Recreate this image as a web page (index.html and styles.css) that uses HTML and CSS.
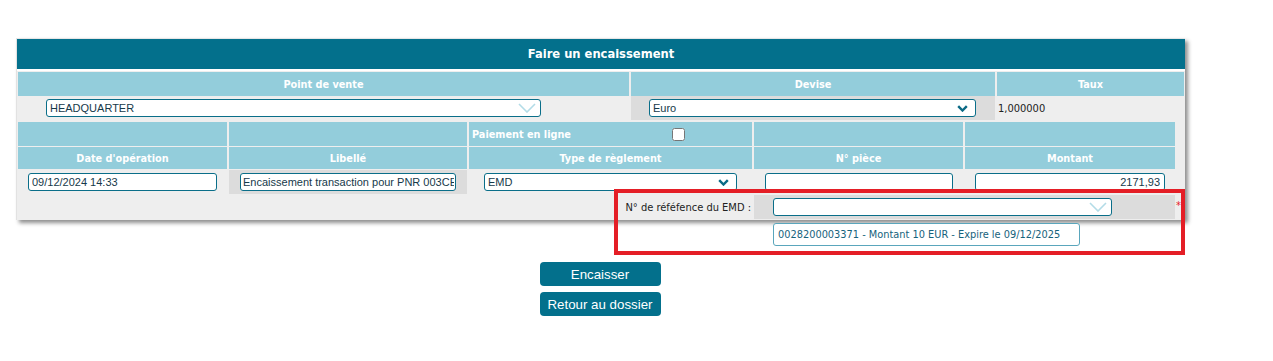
FILE: index.html
```html
<!DOCTYPE html>
<html>
<head>
  <meta charset="UTF-8">
  <title>Faire un encaissement</title>
  <link rel="stylesheet" href="styles.css">
</head>
<body>
  <div class="panel">
    <div class="title">Faire un encaissement</div>

    <div class="grid top">
      <div class="th">Point de vente</div>
      <div class="th">Devise</div>
      <div class="th">Taux</div>

      <div class="td pdv">
        <div class="sel wide">
          <span>HEADQUARTER</span>
          <svg class="chev light" width="18" height="10" viewBox="0 0 18 10"><path d="M1 1 L9 9 L17 1" fill="none" stroke="#b3dce7" stroke-width="1.6"/></svg>
        </div>
      </div>
      <div class="td dark devise">
        <div class="sel">
          <span>Euro</span>
          <svg class="chev" width="11" height="7" viewBox="0 0 11 7"><path d="M1.2 1.2 L5.5 5.5 L9.8 1.2" fill="none" stroke="#0b6a85" stroke-width="2.4"/></svg>
        </div>
      </div>
      <div class="td taux">1,000000</div>
    </div>

    <div class="grid ops">
      <div class="th"></div>
      <div class="th"></div>
      <div class="th online"><span>Paiement en ligne</span><input type="checkbox"></div>
      <div class="th"></div>
      <div class="th"></div>

      <div class="th">Date d'opération</div>
      <div class="th">Libellé</div>
      <div class="th">Type de règlement</div>
      <div class="th">N° pièce</div>
      <div class="th">Montant</div>

      <div class="td c1"><input class="txt date" value="09/12/2024 14:33"></div>
      <div class="td dark c2"><input class="txt libelle" value="Encaissement transaction pour PNR 003CE"></div>
      <div class="td c3">
        <div class="sel type">
          <span>EMD</span>
          <svg class="chev" width="11" height="7" viewBox="0 0 11 7"><path d="M1.2 1.2 L5.5 5.5 L9.8 1.2" fill="none" stroke="#0b6a85" stroke-width="2.4"/></svg>
        </div>
      </div>
      <div class="td c4"><input class="txt piece" value=""></div>
      <div class="td c5"><input class="txt montant" value="2171,93"></div>

      <div class="td emd-label">N° de réféfence du EMD :</div>
      <div class="td dark emd">
        <div class="sel emd-sel">
          <span></span>
          <svg class="chev light" width="18" height="10" viewBox="0 0 18 10"><path d="M1 1 L9 9 L17 1" fill="none" stroke="#b3dce7" stroke-width="1.6"/></svg>
        </div>
        <span class="req">*</span>
        <div class="options">0028200003371 - Montant 10 EUR - Expire le 09/12/2025</div>
      </div>
    </div>
  </div>

  <div class="actions">
    <button class="btn">Encaisser</button>
    <button class="btn">Retour au dossier</button>
  </div>

  <div class="highlight"></div>
</body>
</html>
```

FILE: styles.css
```css
body {
  margin: 0;
  background: #fff;
  font-family: "DejaVu Sans Condensed", "DejaVu Sans", sans-serif;
  font-stretch: condensed;
  font-size: 11px;
  color: #222;
}

.panel {
  margin: 38px 0 0 16px;
  width: 1168px;
  height: 181px;
  background: #eee;
  border-left: 1px solid #e2e2e2;
  border-top: 1px solid #e6e6e6;
  box-shadow: 3px 3px 4px #8f8f8f;
}

.title {
  height: 30px;
  line-height: 30px;
  background: #03708c;
  color: #fff;
  text-align: center;
  font-weight: bold;
  font-size: 12.8px;
  border-bottom: 2px solid #fff;
}

.grid {
  display: grid;
  column-gap: 2px;
  padding: 0 1px;
}

.top {
  grid-template-columns: 611px 364px 187px;
  grid-template-rows: 24px 24px;
  padding-top: 1px;
}

.ops {
  grid-template-columns: 209px 238px 283px 209px 210px;
  grid-template-rows: 24px 22px 24px 24px;
  row-gap: 1px;
  margin-top: 2px;
}

.th {
  background: #93cddb;
  color: #fff;
  font-weight: bold;
  font-size: 10.8px;
  display: flex;
  align-items: center;
  justify-content: center;
}

.online {
  justify-content: space-between;
  padding: 0 67px 0 3px;
}

.online input {
  margin: 1px 0 0 0;
  width: 13px;
  height: 13px;
}

.td {
  display: flex;
  align-items: center;
}

.dark {
  background: #dcdcdc;
}

.pdv { padding-left: 28px; }
.devise { padding-left: 18px; }
.taux { padding-left: 1px; color: #222; }

.sel {
  box-sizing: border-box;
  height: 18px;
  border: 1px solid #0a6e89;
  border-radius: 3px;
  background: #fff;
  display: flex;
  align-items: center;
  justify-content: space-between;
  padding: 0 4px 0 3px;
  font-family: "Liberation Sans", Arial, sans-serif;
  font-stretch: normal;
  font-size: 11px;
  color: #16394a;
}

.sel.wide { width: 495px; }
.devise .sel { width: 327px; padding-right: 7px; }
.type { width: 253px; padding-right: 7px; }

.txt {
  box-sizing: border-box;
  height: 18px;
  border: 1px solid #0a6e89;
  border-radius: 3px;
  background: #fff;
  padding: 0 3px;
  font-family: "Liberation Sans", Arial, sans-serif;
  font-size: 11px;
  color: #16394a;
  outline: none;
}

.c1 { padding-left: 10px; }
.c2 { padding-left: 11px; }
.c3 { padding-left: 15px; }
.c4 { padding-left: 11px; }
.c5 { padding-left: 10px; }

.date { width: 189px; }
.libelle { width: 216px; padding: 0 1px 0 2px; }
.piece { width: 188px; }
.montant { width: 190px; text-align: right; padding-right: 4px; }

.emd-label {
  grid-column: 1 / 4;
  justify-content: flex-end;
  padding-right: 1px;
  color: #222;
}

.emd {
  grid-column: 4 / 6;
  position: relative;
  padding-left: 19px;
}

.emd-sel { width: 339px; }

.req {
  position: absolute;
  left: 100%;
  top: 4px;
  margin-left: 1px;
  color: #e8202a;
  font-size: 11px;
}

.options {
  position: absolute;
  top: 28px;
  left: 19px;
  box-sizing: border-box;
  width: 307px;
  height: 23px;
  line-height: 21px;
  border: 1px solid #5aa6bc;
  border-radius: 3px;
  background: #fff;
  padding-left: 4px;
  color: #16627c;
  font-size: 10.9px;
}

.actions {
  width: 1166px;
  margin-left: 17px;
  margin-top: 42px;
  display: flex;
  flex-direction: column;
  align-items: center;
  gap: 6px;
}

.btn {
  width: 121px;
  height: 24px;
  border: none;
  border-radius: 4px;
  background: #03708c;
  color: #fff;
  font-family: "Liberation Sans", Arial, sans-serif;
  font-size: 13.3px;
  padding: 0;
}

.highlight {
  position: absolute;
  left: 614px;
  top: 189px;
  width: 571px;
  height: 66px;
  box-sizing: border-box;
  border: 4px solid #e41e26;
}
```
